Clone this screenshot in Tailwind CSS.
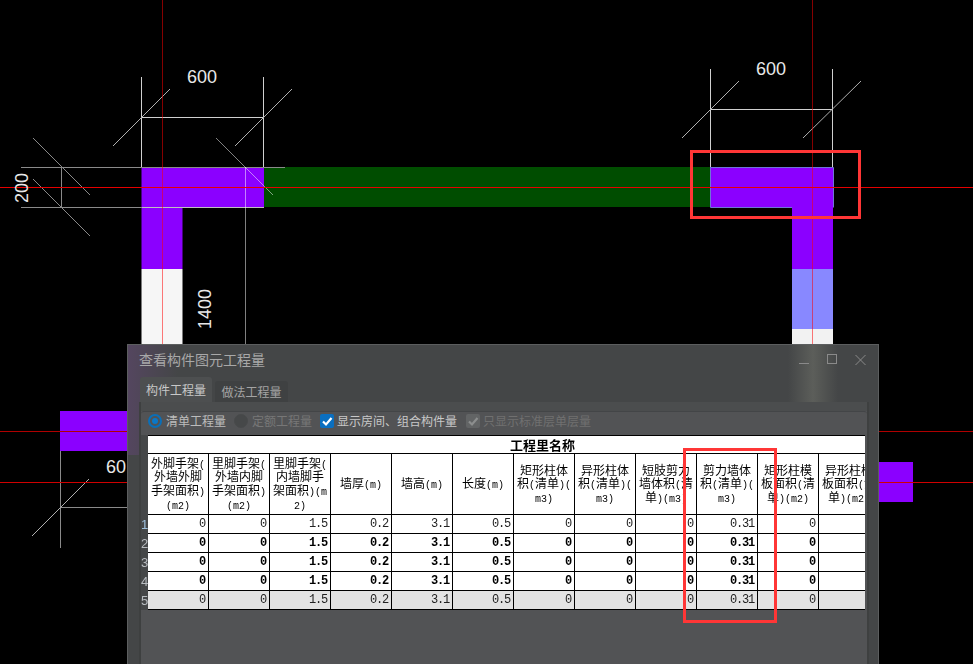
<!DOCTYPE html>
<html lang="zh-CN">
  <head>
    <meta charset="UTF-8" />
    <script src="https://cdn.jsdelivr.net/npm/@tailwindcss/browser@4"></script>
    <title>查看构件图元工程量</title>
  </head>
  <body class="bg-black">
    <div class="relative w-[973px] h-[664px] overflow-hidden bg-black font-['Noto_Sans_CJK_SC',sans-serif]">
      <!-- cad canvas -->
      <svg class="absolute inset-0" width="973" height="664" viewBox="0 0 973 664" fill="none">
        <!-- walls -->
        <rect x="264" y="167" width="446" height="40" fill="#004d00" />
        <path d="M141.5 167H264V207H182.5V269H141.5Z" fill="#8b00ff" />
        <rect x="141.5" y="269" width="41" height="76" fill="#f6f6f6" />
        <path d="M710 167H833V269H792V207H710Z" fill="#8b00ff" />
        <path d="M710.5 207.5V167.5H833.5V207.5M710.5 207.5H792" stroke="#6f74d8" />
        <rect x="792" y="269" width="41" height="60" fill="#8888ff" />
        <rect x="792" y="329" width="41" height="16" fill="#f2f2f2" />
        <rect x="60" y="411" width="68" height="40" fill="#8b00ff" />
        <rect x="879" y="462" width="34" height="40" fill="#8b00ff" />

        <!-- dimensions -->
        <g stroke="#d0d0d0" stroke-width="1">
          <path d="M141.5 77V167M263.5 77V167M141 117.5H264" />
          <path d="M113 146L170 89M235 146L292 89" stroke="#b0b0b0" />
          <path d="M710.5 69V167M832.5 69V167M710 109.5H833" />
          <path d="M682 138L739 81M803 138L861 81" stroke="#b0b0b0" />
        </g>
        <g stroke="#8a8a8a" stroke-width="1">
          <path d="M21 167.5H285M21 207.5H264M61.5 167V207" />
          <path d="M33 138L90 195M33 179L90 236" />
          <path d="M60.5 451V548M60 507.5H128" />
          <path d="M32 536L89 479" stroke="#b0b0b0" />
        </g>
        <path d="M245.5 167V345M216 138L273 195" stroke="#ffffff" stroke-opacity="0.5" />
        <path d="M142 207.5H264" stroke="#ffffff" stroke-opacity="0.45" />

        <!-- axis lines -->
        <path d="M162.5 0V345M812.5 0V345" stroke="#ff0000" stroke-opacity="0.52" />
        <path d="M0 187.5H973" stroke="#e60000" />
        <path d="M0 431.5H128M879 431.5H973" stroke="#b00000" />
        <path d="M0 482.5H128M879 482.5H973" stroke="#d00000" />

        <!-- labels -->
        <g fill="#e8e8e8" font-family="Liberation Sans, sans-serif" font-size="18">
          <text x="187" y="83">600</text>
          <text x="756" y="75">600</text>
          <text x="106" y="473">60</text>
          <text transform="translate(28 203) rotate(-90)">200</text>
          <text transform="translate(211 329) rotate(-90)">1400</text>
        </g>
      </svg>

      <!-- dialog window -->
      <section class="absolute left-[127px] top-[344px] w-[752px] h-[320px] border border-[#5c5e5f] border-b-0 bg-[#444647] flex flex-col overflow-hidden">
        <div class="absolute left-0 top-0 w-[50px] h-[110px] bg-linear-to-r from-[#54465f] to-transparent"></div>
        <div class="absolute left-[660px] top-0 w-[50px] h-[58px] bg-linear-to-r from-transparent via-[#5c5e5a] to-transparent"></div>

        <header class="relative h-[30px] flex items-center pl-[11px] pb-[2px] text-[14px] text-[#a8a8a8]">
          <span>查看构件图元工程量</span>
          <svg class="absolute left-[670px] top-[8px]" width="70" height="14" viewBox="0 0 70 14" fill="none" stroke="#8a8a8a">
            <path d="M1 10.5H11" />
            <rect x="29.5" y="1.5" width="9" height="9" />
            <path d="M57.5 2L67.5 12M67.5 2L57.5 12" />
          </svg>
        </header>

        <div class="relative mt-[3px] ml-[12px] h-[24px] flex items-end text-[12px]">
          <div class="w-[72px] h-[25px] rounded-t-[3px] bg-[#4d4f50] text-[#c8c8c8] flex items-center justify-center">构件工程量</div>
          <div class="ml-[3px] w-[73px] h-[21px] rounded-t-[3px] bg-[#3f4142] text-[#a4a4a4] flex items-center justify-center">做法工程量</div>
        </div>

        <div class="relative ml-[11px] w-[730px] flex-1 border-x-2 border-[#3e4040] bg-[#4b4d4e] pt-[9px]">
          <div class="h-full bg-[#525355]">
            <div class="h-[24px] flex items-center pl-[7px] pb-[6px] border-t border-[#434547] rounded-t-[3px] text-[12px]">
              <span class="w-[14px] h-[14px] rounded-full border-2 border-[#0a6fb8] flex items-center justify-center">
                <span class="w-[6px] h-[6px] rounded-full bg-[#0a78c8]"></span>
              </span>
              <span class="ml-[4px] text-[#bcbcbc]">清单工程量</span>
              <span class="ml-[8px] w-[14px] h-[14px] rounded-full border border-[#484a4b] bg-[#464849]"></span>
              <span class="ml-[4px] text-[#777777]">定额工程量</span>
              <span class="ml-[8px] w-[14px] h-[14px] rounded-[2px] bg-[#0a6fc0] flex items-center justify-center">
                <svg width="12" height="12" viewBox="0 0 12 12" fill="none" stroke="#ffffff" stroke-width="2.2"><path d="M2 6.5L5 9.5L10.5 3" /></svg>
              </span>
              <span class="ml-[3px] text-[#c8c8c8]">显示房间、组合构件量</span>
              <span class="ml-[9px] w-[14px] h-[14px] rounded-[2px] bg-[#626465] flex items-center justify-center">
                <svg width="12" height="12" viewBox="0 0 12 12" fill="none" stroke="#8c8e8e" stroke-width="2.2"><path d="M2 6.5L5 9.5L10.5 3" /></svg>
              </span>
              <span class="ml-[3px] text-[#707070]">只显示标准层单层量</span>
            </div>

            <div class="w-[724px] overflow-hidden will-change-transform">
              <table class="table-fixed w-[800px] border-separate border-spacing-0 text-black">
                <colgroup>
                  <col class="w-[7px]" /><col class="w-[61px]" /><col class="w-[61px]" /><col class="w-[61px]" /><col class="w-[61px]" /><col class="w-[61px]" /><col class="w-[61px]" /><col class="w-[61px]" /><col class="w-[61px]" /><col class="w-[61px]" /><col class="w-[61px]" /><col class="w-[61px]" /><col class="w-[61px]" /><col class="w-[61px]" />
                </colgroup>
                <thead>
                  <tr>
                    <th class="p-0 bg-[#454748]"></th>
                    <th colspan="13" class="h-[19px] p-0 pr-[4px] bg-white border-y border-black text-[13px] leading-none font-bold text-center">工程里名称</th>
                  </tr>
                  <tr id="headRow"></tr>
                </thead>
                <tbody id="rows"></tbody>
              </table>
            </div>
          </div>
        </div>
      </section>

      <!-- red markup boxes -->
      <div class="absolute left-[690px] top-[150px] w-[171px] h-[69px] border-[3px] border-[#ff3636]"></div>
      <div class="absolute left-[683px] top-[448px] w-[94px] h-[175px] border-[3px] border-[#ff3636]"></div>
    </div>

    <script>
      const headers = [
        "外脚手架(|外墙外脚|手架面积)|(m2)",
        "里脚手架(|外墙内脚|手架面积)|(m2)",
        "里脚手架(|内墙脚手|架面积)(m|2)",
        "墙厚(m)",
        "墙高(m)",
        "长度(m)",
        "矩形柱体|积(清单)(|m3)",
        "异形柱体|积(清单)(|m3)",
        "短肢剪力|墙体积(清|单)(m3)",
        "剪力墙体|积(清单)(|m3)",
        "矩形柱模|板面积(清|单)(m2)",
        "异形柱模|板面积(清|单)(m2)",
        "",
      ];
      const values = ["0", "0", "1.5", "0.2", "3.1", "0.5", "0", "0", "0", "0.31", "0", "", ""];

      // half width runs of the header text
      const halfWidth = (text) =>
        text.replace(/[()m0-9]+/g, (run) => `<span class="font-['Liberation_Mono',monospace] text-[10px] leading-none">${run}</span>`);

      document.getElementById("headRow").innerHTML =
        `<th class="p-0 bg-[#454748]"></th>` +
        headers
          .map((text) => {
            const lines = text
              .split("|")
              .map((line) => `<div class="h-[13.6px] leading-[13.6px]">${halfWidth(line)}</div>`)
              .join("");
            return `<th class="h-[61px] p-0 bg-white border-r border-b border-black"><div class="h-[60px] pb-[2px] flex flex-col justify-center overflow-hidden text-[12px] font-normal text-center whitespace-nowrap">${lines}</div></th>`;
          })
          .join("");

      document.getElementById("rows").innerHTML = [1, 2, 3, 4, 5]
        .map((n) => {
          const bold = n > 1 && n < 5;
          const cellClass = n === 5 ? "bg-[#e3e3e3] text-[#222222] font-normal" : bold ? "bg-white text-black font-bold" : "bg-white text-[#222222] font-normal";
          const cells = values
            .map(
              (value) =>
                `<td class="h-[19px] p-0 pr-[3px] border-r border-b border-black text-right text-[12px] leading-none tracking-[-1.2px] font-['Liberation_Mono',monospace] ${cellClass}">${value}</td>`
            )
            .join("");
          const numClass = n === 1 ? "text-[#9fc0dc]" : "text-[#b8bcc0]";
          return `<tr><td class="p-0 bg-[#454748] text-[13px] leading-none font-['Liberation_Sans',sans-serif] overflow-hidden ${numClass}">${n}</td>${cells}</tr>`;
        })
        .join("");
    </script>
  </body>
</html>
